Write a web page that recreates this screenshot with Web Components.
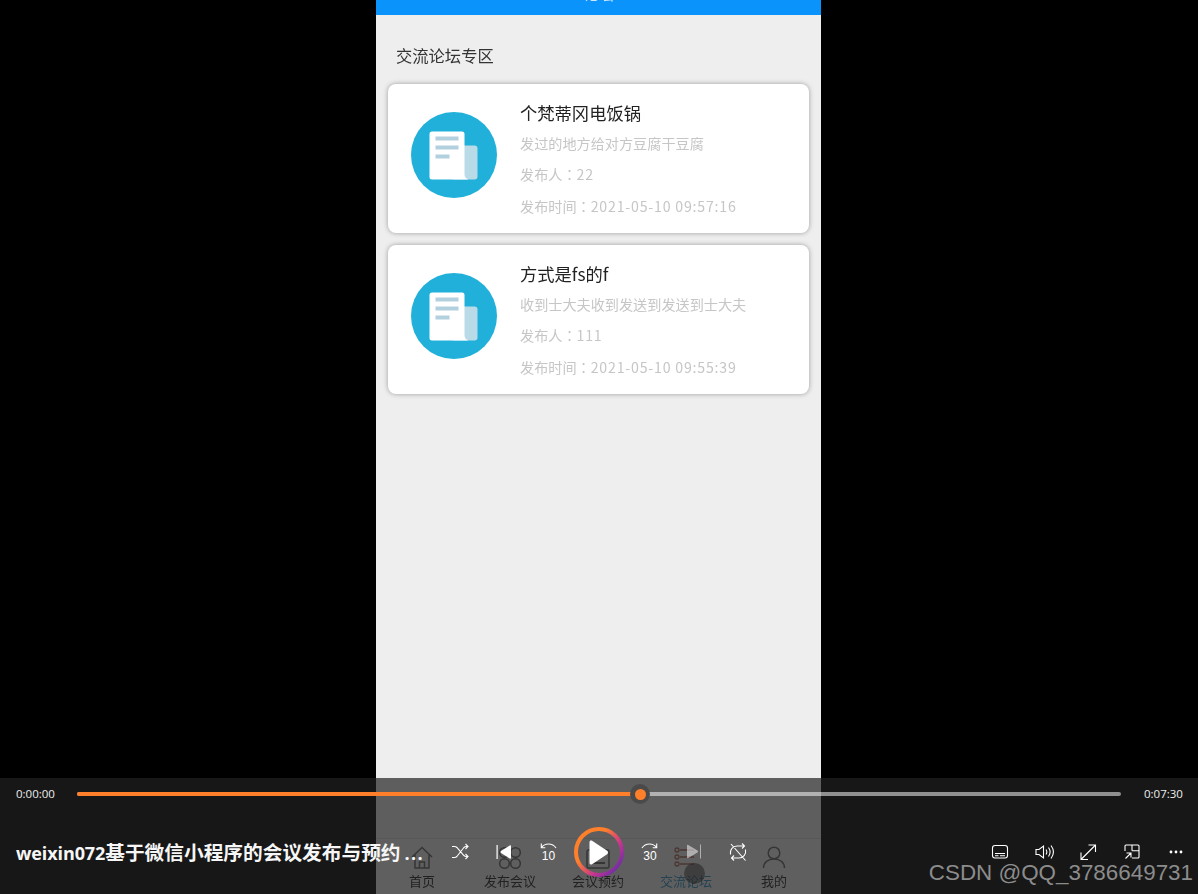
<!DOCTYPE html>
<html lang="zh"><head><meta charset="utf-8"><title>交流论坛</title>
<style>
html,body{margin:0;height:100%;background:#000;overflow:hidden}
body{font-family:"Liberation Sans","Noto Sans CJK SC",sans-serif}
</style></head><body>
<video-stage>
  <forum-phone>
    <forum-card title-text="个梵蒂冈电饭锅" sub="发过的地方给对方豆腐干豆腐" author="22" time="2021-05-10 09:57:16"></forum-card>
    <forum-card title-text="方式是fs的f" sub="收到士大夫收到发送到发送到士大夫" author="111" time="2021-05-10 09:55:39"></forum-card>
  </forum-phone>
  <player-bar></player-bar>
</video-stage>
<script>
function def(name, css, html, init){
  customElements.define(name, class extends HTMLElement{
    connectedCallback(){
      if(this.shadowRoot) return;
      const r=this.attachShadow({mode:'open'});
      const get=k=>this.getAttribute(k)||'';
      r.innerHTML='<style>'+css+'</style>'+(typeof html==='function'?html(get):html);
      if(init) init(r,this);
    }
  });
}
const CJK='"Noto Sans CJK SC",sans-serif';

def('video-stage',`
  :host{display:grid;grid-template-columns:376px 445px 1fr;height:894px;position:relative;background:#000}
`,`<div></div><slot></slot>`);

def('forum-phone',`
  :host{display:flex;flex-direction:column;height:894px;background:#eee;filter:blur(.4px);position:relative;overflow:hidden}
  .head{height:15px;background:#0a93fb;flex:none;overflow:hidden;display:flex;justify-content:center;align-items:flex-end}
  .head span{font:15px/18px ${CJK};color:#cfe8fd;margin-bottom:12px;flex:none}
  h2{margin:0;padding:25px 0 14px 20px;font:400 16.3px/30px ${CJK};color:#333}
  .list{display:flex;flex-direction:column;gap:12px;padding:0 12px}
  .dot{position:absolute;left:308px;top:863px;width:21px;height:21px;border-radius:50%;background:rgba(40,40,40,.55)}
  tab-bar{margin-top:auto}
`,`<div class="head"><span>论坛</span></div><h2>交流论坛专区</h2><div class="list"><slot></slot></div><tab-bar></tab-bar><div class="dot"></div>`);

def('forum-card',`
  :host{display:flex;height:149px;box-sizing:border-box;background:#fff;border-radius:8px;box-shadow:0 0 5px rgba(0,0,0,.35);padding:13px 0 8px 23px;font-family:${CJK}}
  svg{width:86px;height:86px;flex:none;margin:15px 23px 0 0}
  .t{font-size:17.300px;line-height:31px;color:#222}
  .s{font-size:14.150px;line-height:31.300px;color:#c6c6c6;white-space:nowrap}
  .c{font-family:"Noto Sans CJK TC",sans-serif}
  .v{letter-spacing:.8px}
`,g=>`<svg viewBox="0 0 86 86"><circle cx="43" cy="43" r="43" fill="#21b0da"/>
  <rect x="40" y="33.500" width="26.500" height="34" rx="3" fill="#b9dbe8"/>
  <path d="M21 19.500h30a2.500 2.500 0 0 1 2.500 2.500v40c0 3 2 5.500 5 5.500H21a2.500 2.500 0 0 1-2.500-2.500V22a2.500 2.500 0 0 1 2.500-2.500z" fill="#fff"/>
  <g fill="#b3d0df"><rect x="24.500" y="24.500" width="23" height="4"/><rect x="24.500" y="33.500" width="23" height="4"/><rect x="24.500" y="42.500" width="14" height="4"/></g></svg>
  <div><div class="t">${g('title-text')}</div><div class="s">${g('sub')}</div><div class="s">发布人<span class="c" lang="zh-TW">：</span><span class="v">${g('author')}</span></div><div class="s">发布时间<span class="c" lang="zh-TW">：</span><span class="v">${g('time')}</span></div></div>`);

const tabIcons={
 home:`<path d="M5 14 15 4.500 25 14M8 12v13h14V12M12.500 25v-6h5v6" fill="none" stroke="currentColor" stroke-width="1.500"/>`,
 pub:`<g fill="none" stroke="currentColor" stroke-width="1.500"><circle cx="9.500" cy="9.500" r="4.800"/><circle cx="20.500" cy="9.500" r="4.800"/><circle cx="9.500" cy="20.500" r="4.800"/><circle cx="20.500" cy="20.500" r="4.800"/></g>`,
 book:`<g fill="none" stroke="currentColor" stroke-width="1.500"><rect x="4" y="7" width="22" height="18" rx="1.500"/><path d="M8 20h14" stroke-width="2"/></g>`,
 forum:`<g fill="none" stroke="#b06a5a" stroke-width="1.300"><circle cx="6" cy="7" r="2"/><circle cx="6" cy="14" r="2"/><circle cx="6" cy="21" r="2"/><path d="M9 7h14M9 14h14M9 21h14"/></g>`,
 me:`<g fill="none" stroke="currentColor" stroke-width="1.500"><circle cx="15" cy="10" r="5.800"/><path d="M4.500 25c0-5.500 4.500-9 10.500-9s10.500 3.500 10.500 9"/></g>`
};
def('tab-item',`
  :host{display:flex;flex-direction:column;align-items:center;flex:1;color:#666;font:13px/17px ${CJK}}
  svg{width:30px;height:30px;display:block;margin-top:4px}
  span{color:#222;margin-top:-1px}
  :host([active]) span{color:#2e8fc0}
`,g=>`<svg viewBox="0 0 30 30">${tabIcons[g('icon')]}</svg><span>${g('label')}</span>`);

def('tab-bar',`
  :host{display:flex;height:55px;border-top:1px solid #d8d8d8;background:#f2f2f2;flex:none;padding:0 3px 0 2px}
`,`<tab-item icon="home" label="首页"></tab-item><tab-item icon="pub" label="发布会议"></tab-item><tab-item icon="book" label="会议预约"></tab-item><tab-item icon="forum" label="交流论坛" active></tab-item><tab-item icon="me" label="我的"></tab-item>`);

const S='fill="none" stroke="#fff" stroke-width="1.100"';
const picons={
 shuffle:`<path ${S} d="M4 6.500h2.500c1 0 1.700.3 2.400 1l7 8c.7.7 1.400 1 2.400 1H20M4 17.500h2.500c1 0 1.700-.3 2.400-1l7-9c.7-.7 1.400-1 2.400-1H20M17.500 4 20 6.500 17.500 9M17.500 14 20 16.500 17.500 19"/>`,
 prev:`<rect x="4.500" y="5" width="1.200" height="14" fill="#fff"/><path d="M19 6v12c0 .8-.6 1-1.200.6L9 13c-.7-.5-.7-1.500 0-2l8.800-5.600c.6-.4 1.200-.2 1.200.6z" fill="#fff"/>`,
 back:`<path ${S} d="M5.500 7.500C7 5.500 10 4 12.500 4c3.500 0 6 1.700 7.500 4M5.300 3.500v4.200h4"/><text x="12.500" y="19.500" text-anchor="middle" font-family="Liberation Sans,sans-serif" font-size="12" fill="#fff">10</text>`,
 fwd:`<path ${S} d="M18.500 7.500C17 5.500 14 4 11.500 4 8 4 5.500 5.700 4 8M18.700 3.500v4.200h-4"/><text x="12" y="19.500" text-anchor="middle" font-family="Liberation Sans,sans-serif" font-size="12" fill="#fff">30</text>`,
 next:`<g opacity=".5"><rect x="18" y="4.500" width="1" height="14" fill="#fff"/><path d="M5 5.500v12c0 .8.600 1 1.200.6L15.500 12.500c.7-.5.7-1.500 0-2L6.200 4.900C5.600 4.500 5 4.700 5 5.500z" fill="#fff"/></g>`,
 repeat:`<path ${S} d="M4.500 14.500C3.500 9.500 7 6 11 6h7.500M16 3.500l2.500 2.500L16 8.500M19.500 9.500C20.500 14.500 17 18 13 18H5.500M8 15.500 5.500 18 8 20.500M5 4l14.500 16.500"/>`,
 sub:`<rect x="4.500" y="5.500" width="15" height="12.500" rx="2.500" ${S}/><path ${S} d="M7 13.500h10M7 15.800h3.500M12 15.800h5"/>`,
 vol:`<path ${S} d="M4 9.500h3l4.500-3.500v12L7 14.500H4zM14 9.500c1 1.500 1 3.500 0 5M16.500 7.500c2 2.800 2 6.200 0 9M19 5.500c3 4 3 9 0 13"/>`,
 full:`<path ${S} d="M5 19.500 19 5.500M12.500 5h7v7M5 12.500V19.500h7"/>`,
 pip:`<path ${S} d="M5 11V6a1 1 0 0 1 1-1h12a1 1 0 0 1 1 1v11a1 1 0 0 1-1 1h-6M12 5v5.700M12 10.700h7M5.500 18.500 11 13M6.500 13H11v4.500"/>`,
 more:`<g fill="#fff"><circle cx="7" cy="12" r="1.400"/><circle cx="12" cy="12" r="1.400"/><circle cx="17" cy="12" r="1.400"/></g>`
};
def('player-icon',`
  :host{display:flex;width:44px;height:44px;align-items:center;justify-content:center;flex:none}
  svg{width:24px;height:24px;display:block}
`,g=>`<svg viewBox="0 0 24 24">${picons[g('name')]}</svg>`);

def('play-button',`
  :host{display:flex;width:58px;height:58px;flex:none;align-items:center;justify-content:center}
  svg{width:52px;height:52px;display:block}
`,`<svg viewBox="0 0 52 52"><defs><linearGradient id="rg" x1="0.080" y1="0.200" x2="0.900" y2="0.900"><stop offset=".28" stop-color="#ff7f2a"/><stop offset=".68" stop-color="#c8358f"/><stop offset="1" stop-color="#6d2ea6"/></linearGradient></defs>
<circle cx="26" cy="26" r="23" fill="none" stroke="url(#rg)" stroke-width="4"/>
<path d="M18 15.500c0-1.600 1.300-2.300 2.600-1.500l15 10c1.200.8 1.200 2.600 0 3.400l-15 10c-1.300.8-2.600.1-2.600-1.500z" fill="#fff" transform="translate(-1.500 0.800)"/></svg>`);

def('player-bar',`
  :host{position:absolute;left:0;right:0;bottom:0;height:116px;background:rgba(33,33,33,.7);color:#fff;display:flex;flex-direction:column;box-sizing:border-box}
  .top{display:flex;align-items:center;height:32px;flex:none}
  time{font:11.500px/32px "Open Sans","Liberation Sans",sans-serif;width:77px;padding-left:16px;box-sizing:border-box;flex:none;color:#eee}
  time.end{padding-left:23px}
  .track{flex:1;height:4px;border-radius:2px;background:rgba(255,255,255,.52);position:relative;display:flex}
  .fill{width:563px;background:#ff7f2a;border-radius:2px}
  .thumb{position:absolute;left:553px;top:-8px;width:20px;height:20px;border-radius:50%;background:#4a4a4a;display:flex;align-items:center;justify-content:center}
  .thumb i{width:11px;height:11px;border-radius:50%;background:#ff7f2a;display:block}
  .row{display:grid;grid-template-columns:1fr auto 1fr;align-items:center;height:58px;margin-top:13px;flex:none}
  .name{font:700 19.700px/24px "Noto Sans CJK SC",sans-serif;padding-left:16px;white-space:nowrap;color:#f6f6f6}
  .name b{font:700 18px/24px "Open Sans",sans-serif;letter-spacing:-.1px}
  .name b.d{letter-spacing:1.300px;margin-left:4px}
  .mid,.right{display:flex;align-items:center}
  .right{justify-content:flex-end}
  .mark{position:absolute;right:5px;bottom:7px;font:22.400px/28px "Liberation Sans","Noto Sans",sans-serif;color:#8c8c8c;white-space:nowrap}
`,`<div class="top"><time>0:00:00</time><div class="track"><div class="fill"></div><div class="thumb"><i></i></div></div><time class="end">0:07:30</time></div>
<div class="row"><div class="name"><b>weixin072</b>基于微信小程序的会议发布与预约<b class="d">...</b></div>
<div class="mid"><player-icon name="shuffle"></player-icon><player-icon name="prev"></player-icon><player-icon name="back"></player-icon><play-button></play-button><player-icon name="fwd"></player-icon><player-icon name="next"></player-icon><player-icon name="repeat"></player-icon></div>
<div class="right"><player-icon name="sub"></player-icon><player-icon name="vol"></player-icon><player-icon name="full"></player-icon><player-icon name="pip"></player-icon><player-icon name="more"></player-icon></div></div>
<div class="mark">CSDN @QQ_3786649731</div>`);
</script>
</body></html>
